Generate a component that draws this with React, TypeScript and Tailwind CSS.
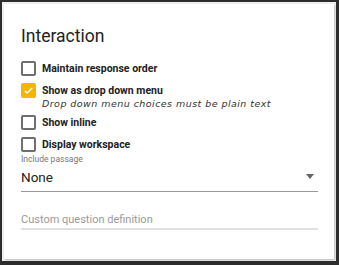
import React, { useState } from 'react';

const Box: React.FC<{ checked?: boolean }> = ({ checked }) =>
  checked ? (
    <div className="w-[15px] h-[15px] rounded-[2px] bg-[#f7b500] flex items-center justify-center shrink-0">
      <svg width="11" height="11" viewBox="0 0 24 24" fill="none" stroke="#fff" strokeWidth="3">
        <path d="M4 12.5l5 5L20 6.5" />
      </svg>
    </div>
  ) : (
    <div className="w-[15px] h-[15px] rounded-[2px] border-2 border-[#6f6f6f] bg-white shrink-0" />
  );

const Row: React.FC<{ label: string; checked?: boolean; note?: string; className?: string }> = ({ label, checked, note, className }) => (
  <div className={`flex items-start gap-[6px] ${className || ''}`}>
    <Box checked={checked} />
    <div className="flex flex-col">
      <span className="text-[10.5px] leading-[15px] font-bold text-[#222]">{label}</span>
      {note && (
        <span className="text-[9.5px] leading-[11px] italic tracking-[0.45px] text-[#333]" style={{ fontFamily: '"DejaVu Sans", sans-serif' }}>
          {note}
        </span>
      )}
    </div>
  </div>
);

export default function App() {
  const [passage] = useState('None');

  return (
    <div className="w-[339px] h-[265px] bg-[#2d2d2d] pl-[2px] pt-[2px] pr-[3px] pb-[4px]" style={{ fontFamily: 'Roboto, "Liberation Sans", sans-serif' }}>
      <div className="w-full h-full bg-[#f1f1f1] p-[2px]">
        <div className="w-full h-full bg-white shadow-[1px_1px_2px_rgba(0,0,0,0.25)] pl-[17px] pr-[16px] pt-[20px]">
          <h1 className="text-[17.5px] leading-[24px] font-normal text-[#222]">Interaction</h1>

          <Row label="Maintain response order" className="mt-[13px]" />
          <Row label="Show as drop down menu" checked note="Drop down menu choices must be plain text" className="mt-[7px]" />
          <Row label="Show inline" className="mt-[6px]" />
          <Row label="Display workspace" className="mt-[7px]" />

          <div className="mt-[1px] text-[8.5px] leading-[12px] text-[#777]">Include passage</div>
          <div className="mt-[4px] flex items-center justify-between border-b border-[#9a9a9a] pb-[6px]">
            <span className="text-[13.5px] leading-[16px] text-[#222]">{passage}</span>
            <svg width="8" height="5" viewBox="0 0 8 5" className="mr-[4px] -mt-[1px]">
              <path d="M0 0h8L4 5z" fill="#666" />
            </svg>
          </div>

          <div className="mt-[21px] border-b-2 border-[#e0e0e0] pb-[1px]">
            <span className="text-[11px] leading-[14px] text-[#9a9a9a] block">Custom question definition</span>
          </div>
        </div>
      </div>
    </div>
  );
}
